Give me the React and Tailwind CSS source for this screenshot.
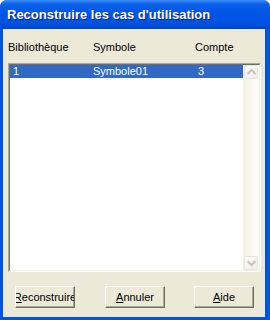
import React from "react";

const rows = [{ lib: "1", sym: "Symbole01", count: "3" }];

const Chevron = ({ up }) => (
  <svg width="9" height="6" viewBox="0 0 9 6">
    <path
      d={up ? "M0.5 5 L4.5 1 L8.5 5" : "M0.5 1 L4.5 5 L8.5 1"}
      fill="none"
      stroke="#C8C5B6"
      strokeWidth="2"
    />
  </svg>
);

const ScrollButton = ({ up }) => (
  <div className="h-[14px] w-[14px] flex items-center justify-center rounded-[2px] border border-[#E6E4DA] bg-[linear-gradient(135deg,#FDFDFC,#EEEDE6)]">
    <Chevron up={up} />
  </div>
);

const Button = ({ label }) => (
  <button className="w-[60px] h-[22px] flex items-center justify-center overflow-hidden bg-[#ECE9D8] border border-t-white border-l-white border-r-[#716F64] border-b-[#716F64] shadow-[inset_-1px_-1px_0_#ACA899] text-[11px] text-black">
    <span className="whitespace-nowrap">
      <span className="underline">{label[0]}</span>
      {label.slice(1)}
    </span>
  </button>
);

export default function App() {
  return (
    <div
      className="w-[270px] h-[320px] flex flex-col bg-[#0054E3] rounded-t-[7px] overflow-hidden"
      style={{ fontFamily: '"Liberation Sans", Arial, sans-serif' }}
    >
      <div className="h-[29px] shrink-0 flex items-center pl-[7px] bg-[linear-gradient(to_bottom,#3D8EF8_0%,#0B60EB_14%,#0055E5_45%,#0053E2_80%,#0046C9_100%)]">
        <span className="text-white font-bold text-[13px] [text-shadow:1px_1px_0_#0A1E8C]">
          Reconstruire les cas d'utilisation
        </span>
      </div>

      <div className="flex-1 flex flex-col ml-[3px] mr-[5px] mb-[3px] bg-[#ECE9D8] text-[11px] text-black">
        <div className="flex h-[13px] mt-[12px] pl-[5px] leading-[13px]">
          <span className="w-[85px]">Bibliothèque</span>
          <span className="w-[102px]">Symbole</span>
          <span>Compte</span>
        </div>

        <div className="mt-[9px] ml-[5px] mr-[4px] h-[209px] flex border border-t-[#ACA899] border-l-[#ACA899] border-r-white border-b-white">
          <div className="flex-1 flex border border-t-[#716F64] border-l-[#716F64] border-r-[#F1EFE2] border-b-[#F1EFE2] bg-white">
            <div className="flex-1 flex flex-col">
              {rows.map(r => (
                <div
                  key={r.sym}
                  className="flex h-[13px] leading-[13px] bg-[#316AC5] text-white"
                >
                  <span className="w-[83px] pl-[3px]">{r.lib}</span>
                  <span className="w-[105px]">{r.sym}</span>
                  <span>{r.count}</span>
                </div>
              ))}
            </div>
            <div className="w-[16px] flex flex-col justify-between items-center bg-[linear-gradient(to_right,#F3F1EA,#FEFEFB)]">
              <ScrollButton up />
              <ScrollButton />
            </div>
          </div>
        </div>

        <div className="flex mt-[14px] pl-[12px] gap-[30px]">
          <Button label="Reconstruire" />
          <Button label="Annuler" />
          <div className="ml-[-1px]">
            <Button label="Aide" />
          </div>
        </div>
      </div>
    </div>
  );
}
